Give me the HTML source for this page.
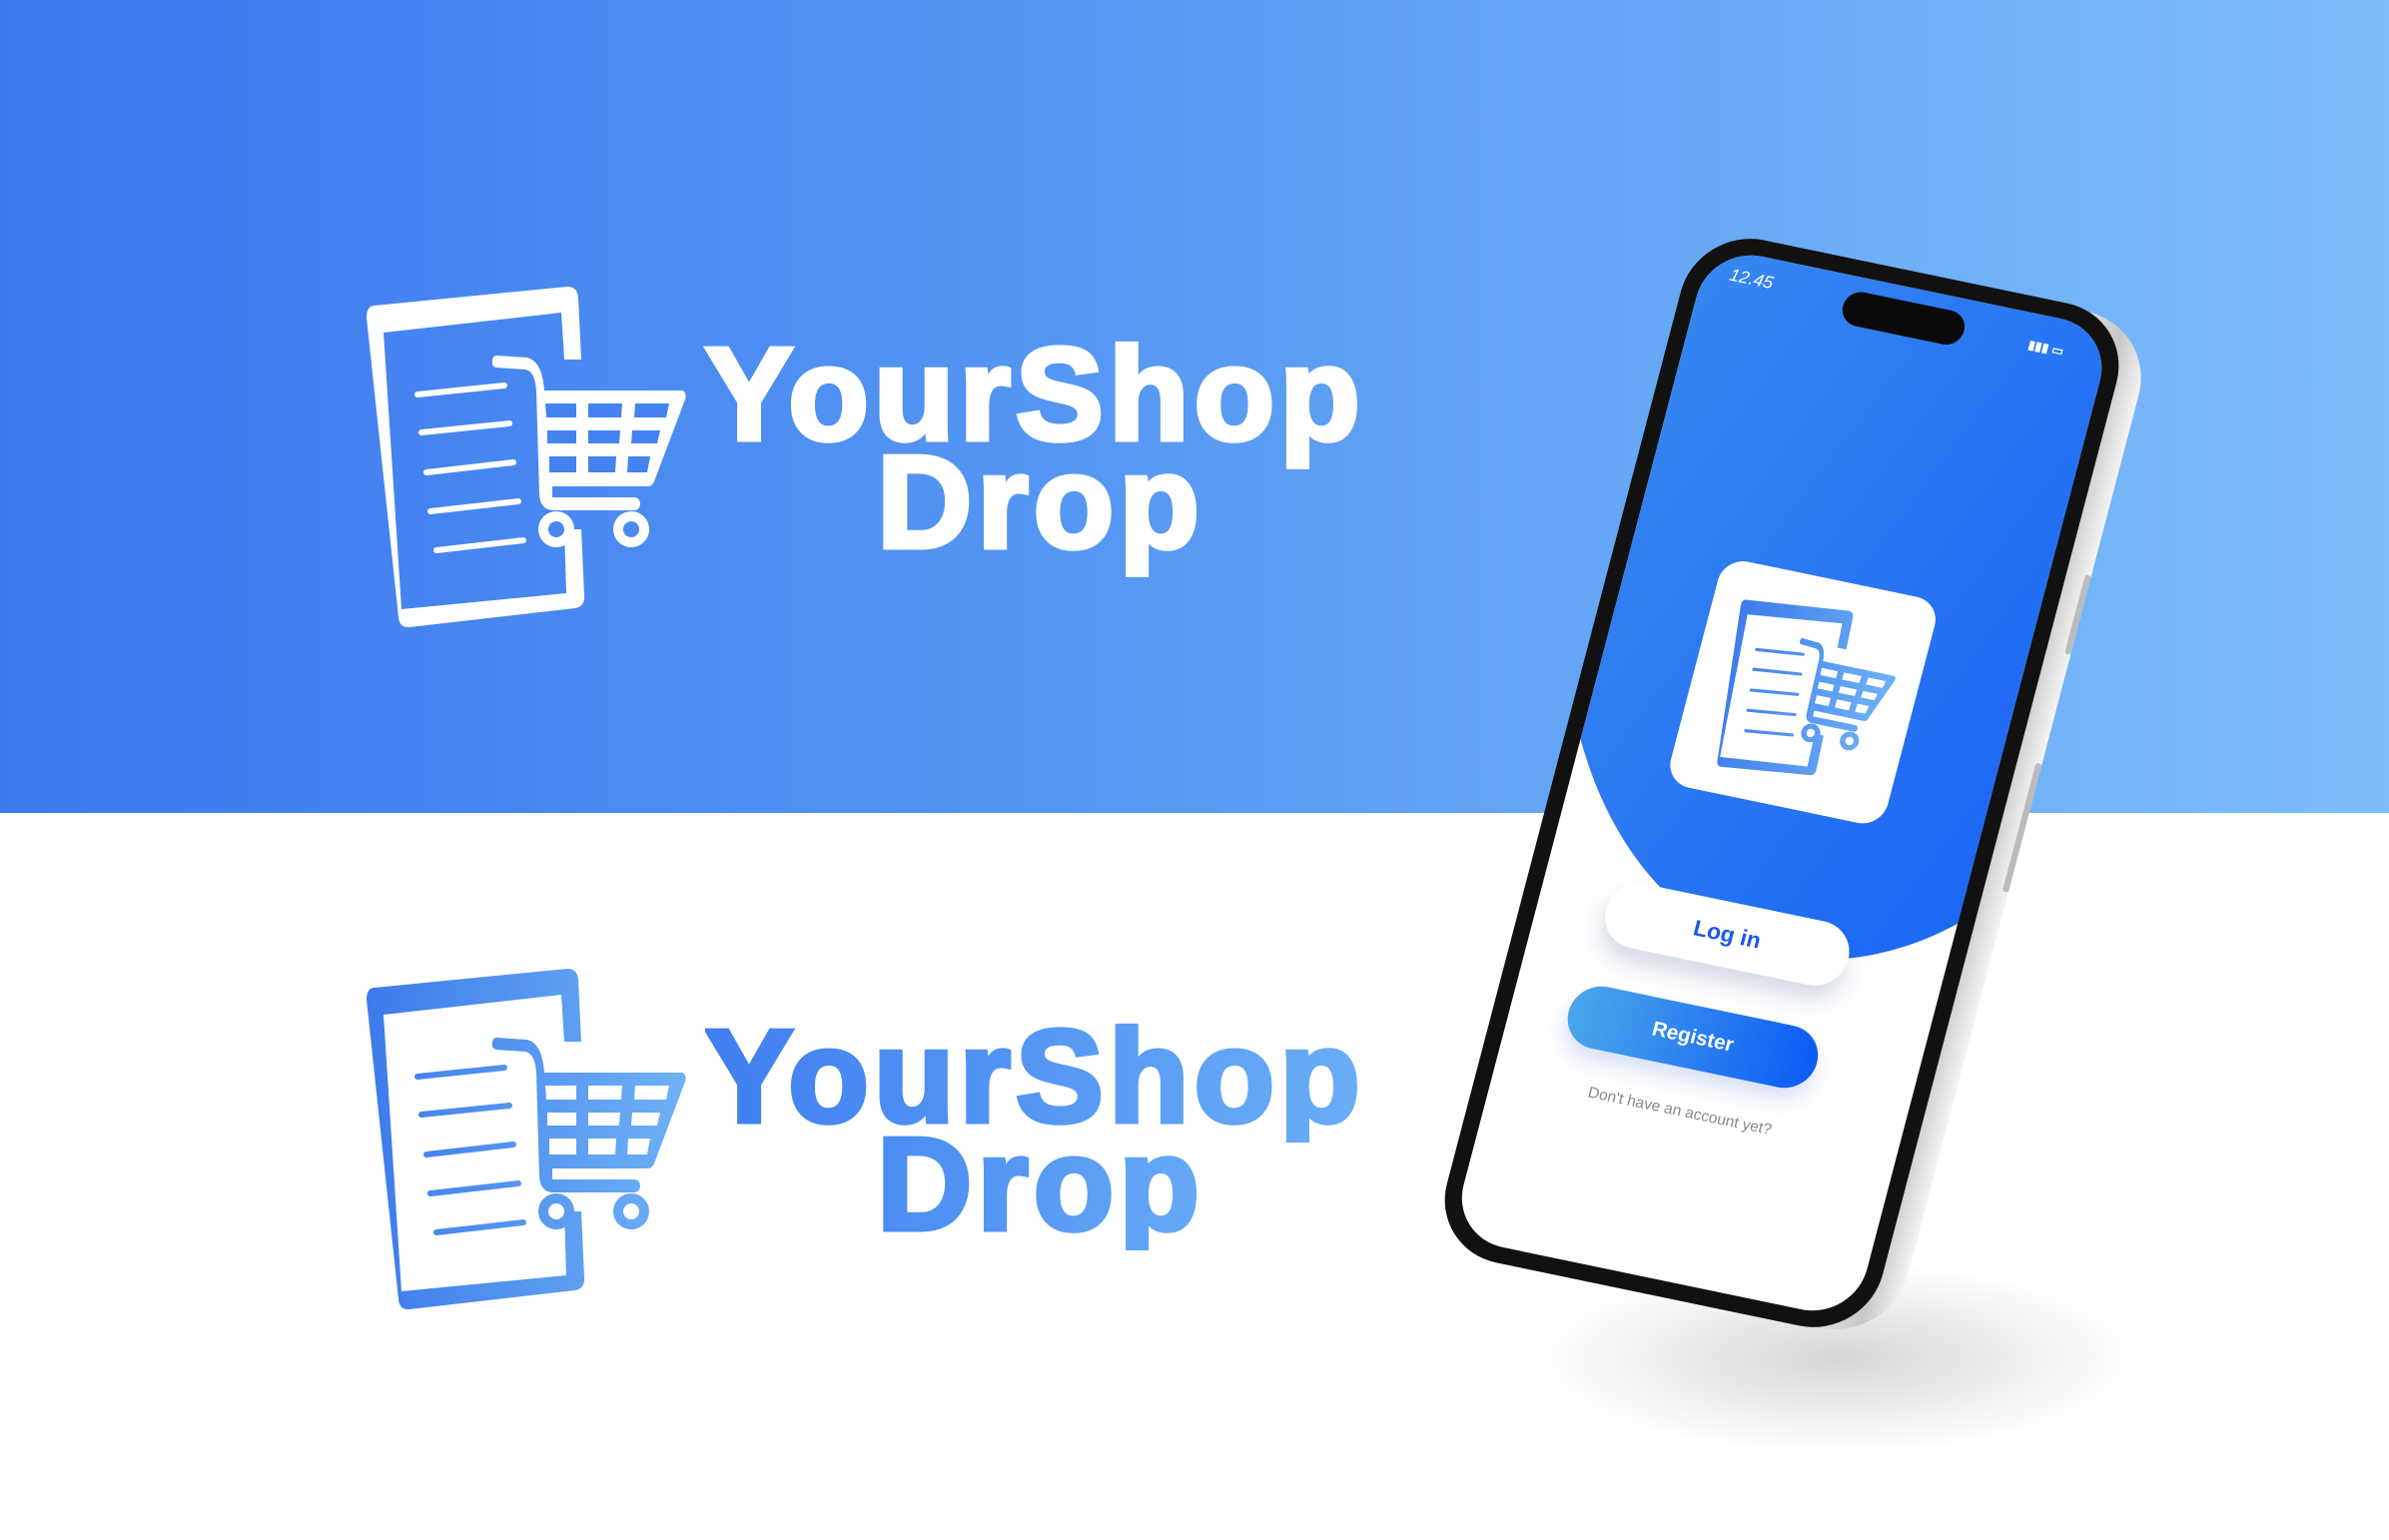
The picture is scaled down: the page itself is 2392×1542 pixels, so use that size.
<!DOCTYPE html>
<html><head><meta charset="utf-8"><style>
html,body{margin:0;padding:0}
body{width:2392px;height:1542px;position:relative;overflow:hidden;background:#fff;font-family:"Liberation Sans",sans-serif}
.band{position:absolute;left:0;top:0;width:2392px;height:814px;background:linear-gradient(90deg,#3b78ee 0%,#5597f3 45%,#7dbdf9 100%)}
.txt{position:absolute;font-weight:bold;font-size:132px;line-height:1;letter-spacing:5px;-webkit-text-stroke:5px currentColor;white-space:nowrap}
.phone{position:absolute;left:1712px;top:246px;width:400px;height:1000px;transform-origin:0 0;transform:matrix(1.01,0.21,-0.26,0.992,0,0)}
</style></head><body>
<div class="band"></div>

<svg width="0" height="0" style="position:absolute">
<defs>
<g id="logo">
<path d="M374 306 L568 287 Q578 287 579 298 L582 360 L565 360 L562 313 L384 333 L402 610 L567 594 L565 530 L582 530 L585 596 Q586 607 576 609 L410 628 Q400 629 399 618 L367 318 Q367 307 374 306 Z"/>
<g style="stroke:var(--f);stroke-width:6;stroke-linecap:round;fill:none">
<line x1="418" y1="395" x2="505" y2="386"/>
<line x1="422" y1="433" x2="510" y2="424"/>
<line x1="427" y1="473" x2="514" y2="463"/>
<line x1="431" y1="512" x2="519" y2="502"/>
<line x1="437" y1="551" x2="524" y2="541"/>
</g>
<path d="M497 356 L528 358 Q543 362 545 391 L683 391 Q688 393 686 400 L655 482 Q653 487 648 487 L553 487 L553 498 L636 498 Q641 499 641 505 Q640 511 635 511 L553 511 Q541 510 540 495 L537 392 Q536 372 526 370 L497 368 Q492 367 493 362 Q493 356 497 356 Z"/>
<g style="fill:var(--h)">
<polygon points="546,404 577,404 577,418 547,418"/>
<polygon points="589,404 623,404 622,418 589,418"/>
<polygon points="636,404 670,404 667,418 635,418"/>
<polygon points="548,431 577,431 577,444 548,444"/>
<polygon points="589,431 621,431 620,444 589,444"/>
<polygon points="633,431 661,431 658,444 632,444"/>
<polygon points="550,457 577,457 577,473 550,473"/>
<polygon points="589,457 617,457 616,473 589,473"/>
<polygon points="629,457 651,457 648,473 628,473"/>
</g>
<circle cx="557" cy="530" r="13" style="fill:none;stroke:var(--f);stroke-width:10"/>
<circle cx="632" cy="530" r="13" style="fill:none;stroke:var(--f);stroke-width:10"/>
</g>
</defs>
</svg>

<svg width="2392" height="1542" style="position:absolute;left:0;top:0">
<defs>
<linearGradient id="gb2" gradientUnits="userSpaceOnUse" x1="366" y1="0" x2="690" y2="0"><stop offset="0" stop-color="#3d7bea"/><stop offset="1" stop-color="#6fb2f6"/></linearGradient>
<radialGradient id="sh" cx="0.5" cy="0.5" r="0.5"><stop offset="0" stop-color="#000" stop-opacity="0.16"/><stop offset="1" stop-color="#000" stop-opacity="0"/></radialGradient>
</defs>
<use href="#logo" fill="#fff" style="--f:#fff;--h:#4483ef"/>
<use href="#logo" transform="translate(0,683)" fill="url(#gb2)" style="--f:url(#gb2);--h:#fff"/>
<ellipse cx="1840" cy="1360" rx="300" ry="95" fill="url(#sh)"/>
</svg>

<div class="txt" style="left:706px;top:329px;color:#fff">YourShop</div>
<div class="txt" style="left:878px;top:437px;color:#fff">Drop</div>
<div class="txt" style="left:706px;top:1012px;background:linear-gradient(90deg,#3f7ff0,#6aaef7);-webkit-background-clip:text;color:transparent;-webkit-text-stroke:5px transparent">YourShop</div>
<div class="txt" style="left:878px;top:1120px;background:linear-gradient(90deg,#4a8cf2,#66a9f6);-webkit-background-clip:text;color:transparent;-webkit-text-stroke:5px transparent">Drop</div>

<div class="phone">
  <div style="position:absolute;left:-10px;top:-12px;width:450px;height:1026px;border-radius:70px;background:linear-gradient(90deg,#9a9a9a,#e9e9e9 80%,#c8c8c8 93%,#f4f4f4)"></div>
  <div style="position:absolute;left:434px;top:240px;width:6px;height:80px;background:#bbb;border-radius:3px"></div>
  <div style="position:absolute;left:434px;top:430px;width:6px;height:130px;background:#bbb;border-radius:3px"></div>
  <div style="position:absolute;left:-16px;top:-16px;width:432px;height:1032px;border-radius:66px;background:#111"></div>
  <div style="position:absolute;left:0;top:0;width:400px;height:1000px;border-radius:52px;overflow:hidden;background:#fff">
    <svg width="400" height="1000" style="position:absolute;left:0;top:0">
      <defs><linearGradient id="sg" x1="0" y1="0" x2="1" y2="0.6"><stop offset="0" stop-color="#3d8ff0"/><stop offset="1" stop-color="#1b66f5"/></linearGradient></defs>
      <ellipse cx="240" cy="210" rx="310" ry="455" fill="url(#sg)"/>
    </svg>
    <div style="position:absolute;left:26px;top:14px;color:#fff;font-size:17px;font-style:italic">12.45</div>
    <div style="position:absolute;left:140px;top:14px;width:120px;height:34px;border-radius:17px;background:#0a0a0a"></div>
    <div style="position:absolute;left:324px;top:24px;color:#fff;font-size:12px;font-weight:bold">▮▮▮ ▭</div>
    <div style="position:absolute;left:90px;top:295px;width:215px;height:228px;border-radius:24px;background:#fff">
      <svg width="170" height="180" viewBox="360 282 332 350" style="position:absolute;left:24px;top:24px">
        <use href="#logo" fill="url(#gb2)" style="--f:url(#gb2);--h:#fff"/>
      </svg>
    </div>
    <div style="position:absolute;left:66px;top:624px;width:240px;height:64px;border-radius:32px;background:#fff;box-shadow:0 14px 22px rgba(40,70,140,0.2);text-align:center;line-height:64px;color:#1d57ee;font-weight:bold;font-size:22px">Log in</div>
    <div style="position:absolute;left:56px;top:730px;width:246px;height:62px;border-radius:31px;background:linear-gradient(90deg,#4ba7e9,#0b5bf5);box-shadow:0 12px 20px rgba(40,90,200,0.18);text-align:center;line-height:62px;color:#fff;font-weight:bold;font-size:20px">Register</div>
    <div style="position:absolute;left:40px;top:826px;width:290px;text-align:center;color:#888;font-size:15px">Don't have an account yet?</div>
  </div>
</div>
</body></html>
